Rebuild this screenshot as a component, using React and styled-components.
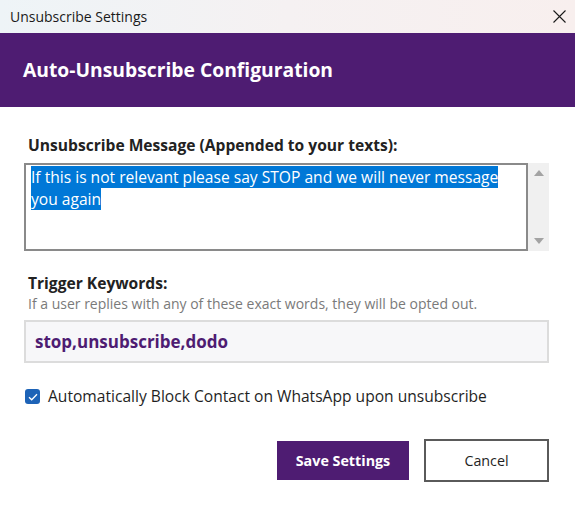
import React from "react";
import styled, { createGlobalStyle } from "styled-components";

const Global = createGlobalStyle`
  html, body { margin: 0; padding: 0; background: #ffffff; }
  body { font-family: "Open Sans", "Noto Sans", sans-serif; color: #1f1f1f; }
  * { box-sizing: border-box; }
`;

const PURPLE = "#4e1c72";

const Window = styled.div`
  width: 575px;
  height: 507px;
  display: flex;
  flex-direction: column;
  background: #ffffff;
`;

const TitleBar = styled.div`
  height: 33px;
  display: flex;
  align-items: center;
  justify-content: space-between;
  padding: 0 0 0 10px;
  background: linear-gradient(90deg, #eef4f7 0%, #f5f1f2 50%, #f8efee 100%);
`;

const TitleText = styled.span`
  font-size: 14px;
  color: #1a1a1a;
`;

const CloseButton = styled.button`
  width: 32px;
  height: 33px;
  border: 0;
  background: transparent;
  display: flex;
  align-items: center;
  justify-content: center;
  padding: 0 0 1px;
`;

const Header = styled.div`
  height: 74px;
  background: ${PURPLE};
  display: flex;
  align-items: center;
  padding-left: 23px;
`;

const HeaderTitle = styled.h1`
  margin: 0 0 2px;
  font-size: 19.3px;
  font-weight: 700;
  color: #ffffff;
`;

const Body = styled.div`
  display: flex;
  flex-direction: column;
  padding: 28px 26px 0 24px;
`;

const Label = styled.label`
  display: block;
  font-size: 15.6px;
  font-weight: 700;
  line-height: 20px;
  color: #222222;
  padding-left: 4px;
  margin-bottom: ${(p) => p.$gap || 8}px;
`;

const Hint = styled.div`
  font-size: 14px;
  line-height: 19px;
  color: #7a7a7a;
  padding-left: 4px;
  margin-bottom: 7px;
`;

const TextAreaRow = styled.div`
  display: flex;
  height: 88px;
  margin-bottom: 22px;
`;

const TextArea = styled.div`
  flex: 1;
  border: 2px solid #8a8a8a;
  padding: 1px 5px;
  font-size: 15.6px;
  line-height: 22px;
  color: #1f1f1f;
  background: #ffffff;
`;

const Selected = styled.span`
  background: #0078d7;
  color: #ffffff;
`;

const ScrollBar = styled.div`
  width: 21px;
  background: #f0f0f0;
  display: flex;
  flex-direction: column;
  justify-content: space-between;
  align-items: center;
  padding: 7px 0;
`;

const Arrow = styled.div`
  width: 0;
  height: 0;
  border-left: 5px solid transparent;
  border-right: 5px solid transparent;
  ${(p) =>
    p.$down
      ? "border-top: 6px solid #a3a3a3;"
      : "border-bottom: 6px solid #a3a3a3;"}
`;

const KeywordInput = styled.div`
  height: 43px;
  border: 2px solid #dcdcdc;
  background: #f7f7f9;
  display: flex;
  align-items: center;
  padding-left: 9px;
  font-size: 17px;
  font-weight: 700;
  color: ${PURPLE};
  margin-bottom: 23px;
`;

const CheckRow = styled.div`
  display: flex;
  align-items: center;
  gap: 8px;
  padding-left: 1px;
  font-size: 15.6px;
  line-height: 21px;
  color: #1f1f1f;
  margin-bottom: 32px;
`;

const CheckBox = styled.span`
  width: 15px;
  height: 15px;
  border-radius: 3px;
  background: #1d63b7;
  display: flex;
  align-items: center;
  justify-content: center;
`;

const Buttons = styled.div`
  display: flex;
  justify-content: flex-end;
  align-items: center;
  gap: 15px;
`;

const Button = styled.button`
  font-family: inherit;
  font-size: 14.3px;
  cursor: pointer;
  ${(p) =>
    p.$primary
      ? `
    width: 132px;
    height: 39px;
    background: ${PURPLE};
    color: #ffffff;
    font-weight: 700;
    border: 0;
  `
      : `
    width: 125px;
    height: 43px;
    background: #ffffff;
    color: #1f1f1f;
    border: 2px solid #5a5a5a;
  `}
`;

export default function App() {
  return (
    <>
      <Global />
      <Window>
        <TitleBar>
          <TitleText>Unsubscribe Settings</TitleText>
          <CloseButton aria-label="Close">
            <svg width="13" height="13" viewBox="0 0 13 13">
              <path d="M0.5 0.5 L12.5 12.5 M12.5 0.5 L0.5 12.5" stroke="#1a1a1a" strokeWidth="1.1" />
            </svg>
          </CloseButton>
        </TitleBar>
        <Header>
          <HeaderTitle>Auto-Unsubscribe Configuration</HeaderTitle>
        </Header>
        <Body>
          <Label>Unsubscribe Message (Appended to your texts):</Label>
          <TextAreaRow>
            <TextArea>
              <Selected>If this is not relevant please say STOP and we will never message </Selected>
              <br />
              <Selected>you again</Selected>
            </TextArea>
            <ScrollBar>
              <Arrow />
              <Arrow $down />
            </ScrollBar>
          </TextAreaRow>
          <Label $gap={1}>Trigger Keywords:</Label>
          <Hint>If a user replies with any of these exact words, they will be opted out.</Hint>
          <KeywordInput>stop,unsubscribe,dodo</KeywordInput>
          <CheckRow>
            <CheckBox>
              <svg width="10" height="8" viewBox="0 0 10 8">
                <path d="M1 4.2 L3.7 6.8 L9 1.2" fill="none" stroke="#ffffff" strokeWidth="1.3" />
              </svg>
            </CheckBox>
            Automatically Block Contact on WhatsApp upon unsubscribe
          </CheckRow>
          <Buttons>
            <Button $primary>Save Settings</Button>
            <Button>Cancel</Button>
          </Buttons>
        </Body>
      </Window>
    </>
  );
}
